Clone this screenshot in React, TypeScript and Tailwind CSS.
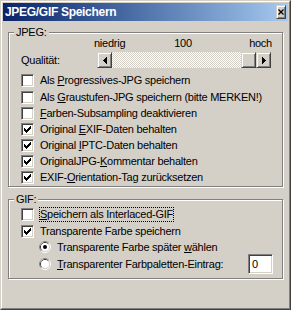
import type { ReactNode } from 'react'
import clsx from 'clsx'

const raised =
  'border border-t-[#d4d0c8] border-l-[#d4d0c8] border-r-[#404040] border-b-[#404040] shadow-[inset_1px_1px_0_#ffffff,inset_-1px_-1px_0_#808080] bg-[#d4d0c8]'
const sunken =
  'border border-t-[#808080] border-l-[#808080] border-r-white border-b-white shadow-[inset_1px_1px_0_#404040,inset_-1px_-1px_0_#d4d0c8] bg-white'

function Check({ checked }: { checked?: boolean }) {
  return (
    <div className={clsx('w-[13px] h-[13px] mt-px shrink-0 flex items-start', sunken)}>
      {checked && (
        <svg width="7" height="7" viewBox="0 0 7 7" className="ml-[2px] mt-[2px]" shapeRendering="crispEdges">
          <path
            d="M6 0h1v1h-1z M5 1h2v1h-2z M0 2h1v1h-1z M4 2h3v1h-3z M0 3h2v1h-2z M3 3h3v1h-3z M0 4h5v1h-5z M1 5h3v1h-3z M2 6h1v1h-1z"
            fill="#000"
          />
        </svg>
      )}
    </div>
  )
}

function Radio({ checked }: { checked?: boolean }) {
  return (
    <svg width="12" height="12" viewBox="0 0 12 12" className="shrink-0">
      <circle cx="6" cy="6" r="5.5" fill="none" stroke="#ffffff" />
      <path d="M2.11 9.89A5.5 5.5 0 0 1 9.89 2.11" fill="none" stroke="#808080" />
      <circle cx="6" cy="6" r="4.5" fill="none" stroke="#d4d0c8" />
      <path d="M2.82 9.18A4.5 4.5 0 0 1 9.18 2.82" fill="none" stroke="#404040" />
      <circle cx="6" cy="6" r="4" fill="#ffffff" />
      {checked && <circle cx="6" cy="6" r="2" fill="#000" />}
    </svg>
  )
}

function CheckRow({ checked, children, first }: { checked?: boolean; children: ReactNode; first?: boolean }) {
  return (
    <div className={clsx('flex items-start', first ? 'h-[17px]' : 'h-[16px]')}>
      <Check checked={checked} />
      <span className="ml-[6px] mt-px leading-[13px] whitespace-nowrap">{children}</span>
    </div>
  )
}

function Group({ label, className, children }: { label: string; className: string; children: ReactNode }) {
  return (
    <div
      className={clsx(
        'relative ml-[5px] w-[275px] border border-[#808080] shadow-[inset_1px_1px_0_#ffffff,1px_1px_0_#ffffff]',
        className
      )}
    >
      <span className="absolute -top-[7px] left-[5px] px-[2px] bg-[#d4d0c8] leading-[13px]">{label}</span>
      {children}
    </div>
  )
}

export default function App() {
  return (
    <div className="w-[291px] h-[310px] bg-[#d4d0c8] border border-t-[#d4d0c8] border-l-[#d4d0c8] border-r-[#404040] border-b-[#404040] text-[11px] tracking-[-0.25px] text-black font-['Liberation_Sans',Arial,sans-serif]">
      <div className="h-full border border-t-white border-l-white border-r-[#808080] border-b-[#808080] p-px flex flex-col">
        {/* Title bar */}
        <div className="h-[18px] shrink-0 flex items-center bg-linear-to-r from-[#0a246a] to-[#a6caf0] pl-[2px]">
          <span className="text-white font-bold text-[12px] tracking-[-0.3px] leading-[14px]">JPEG/GIF Speichern</span>
          <div className={clsx('ml-auto mr-[2px] w-[10px] h-[14px] flex items-center justify-center', raised)}>
            <svg width="6" height="6" viewBox="0 0 6 6">
              <path d="M0.5 0.5L5.5 5.5M5.5 0.5L0.5 5.5" stroke="#000" strokeWidth="1.3" />
            </svg>
          </div>
        </div>

        {/* JPEG */}
        <Group label="JPEG:" className="mt-[11px] h-[155px]">
          <div className="mt-[4px] ml-[85px] w-[178px] grid grid-cols-3 leading-[13px]">
            <span className="text-left">niedrig</span>
            <span className="text-center">100</span>
            <span className="text-right">hoch</span>
          </div>
          <div className="mt-[2px] pl-[12px] flex items-center h-[16px]">
            <span className="w-[76px] leading-[13px]">Qualität:</span>
            <div className="w-[174px] h-[16px] flex">
              <div className={clsx('w-[15px] h-[16px] flex items-center justify-center', raised)}>
                <svg width="4" height="7" viewBox="0 0 4 7" shapeRendering="crispEdges">
                  <path d="M3 0h1v7h-1z M2 1h1v5h-1z M1 2h1v3h-1z M0 3h1v1h-1z" fill="#000" />
                </svg>
              </div>
              <div className="flex-1 h-[16px] bg-[repeating-conic-gradient(#ffffff_0%_25%,#d4d0c8_0%_50%)] bg-[length:2px_2px]" />
              <div className={clsx('w-[15px] h-[16px]', raised)} />
              <div className={clsx('w-[15px] h-[16px] flex items-center justify-center', raised)}>
                <svg width="4" height="7" viewBox="0 0 4 7" shapeRendering="crispEdges">
                  <path d="M0 0h1v7h-1z M1 1h1v5h-1z M2 2h1v3h-1z M3 3h1v1h-1z" fill="#000" />
                </svg>
              </div>
            </div>
          </div>
          <div className="mt-[5px] pl-[12px] flex flex-col">
            <CheckRow first>
              Als <u>P</u>rogressives-JPG speichern
            </CheckRow>
            <CheckRow>
              Als <u>G</u>raustufen-JPG speichern (bitte MERKEN!)
            </CheckRow>
            <CheckRow>
              <u>F</u>arben-Subsampling deaktivieren
            </CheckRow>
            <CheckRow checked>
              Original <u>E</u>XIF-Daten behalten
            </CheckRow>
            <CheckRow checked>
              Original <u>I</u>PTC-Daten behalten
            </CheckRow>
            <CheckRow checked>
              OriginalJPG-<u>K</u>ommentar behalten
            </CheckRow>
            <CheckRow checked>
              EXIF-<u>O</u>rientation-Tag zurücksetzen
            </CheckRow>
          </div>
        </Group>

        {/* GIF */}
        <Group label="GIF:" className="mt-[12px] h-[80px]">
          <div className="mt-[7px] pl-[12px] flex flex-col">
            <div className="flex items-start h-[17px]">
              <Check />
              <span className="ml-[6px] mt-px leading-[13px] whitespace-nowrap outline-1 outline-dotted outline-black">
                <u>S</u>peichern als Interlaced-GIF
              </span>
            </div>
            <CheckRow checked>Transparente Farbe speichern</CheckRow>
          </div>
          <div className="pl-[30px] flex flex-col">
            <div className="flex items-center h-[14px]">
              <Radio checked />
              <span className="ml-[6px] leading-[13px] whitespace-nowrap">
                Transparente Farbe später <u>w</u>ählen
              </span>
            </div>
            <div className="flex items-center h-[20px]">
              <Radio />
              <span className="ml-[6px] leading-[13px] whitespace-nowrap">
                <u>T</u>ransparenter Farbpaletten-Eintrag:
              </span>
              <div className={clsx('ml-auto mr-[9px] w-[25px] h-[20px] pl-[3px] flex items-center leading-[13px]', sunken)}>
                0
              </div>
            </div>
          </div>
        </Group>
      </div>
    </div>
  )
}
